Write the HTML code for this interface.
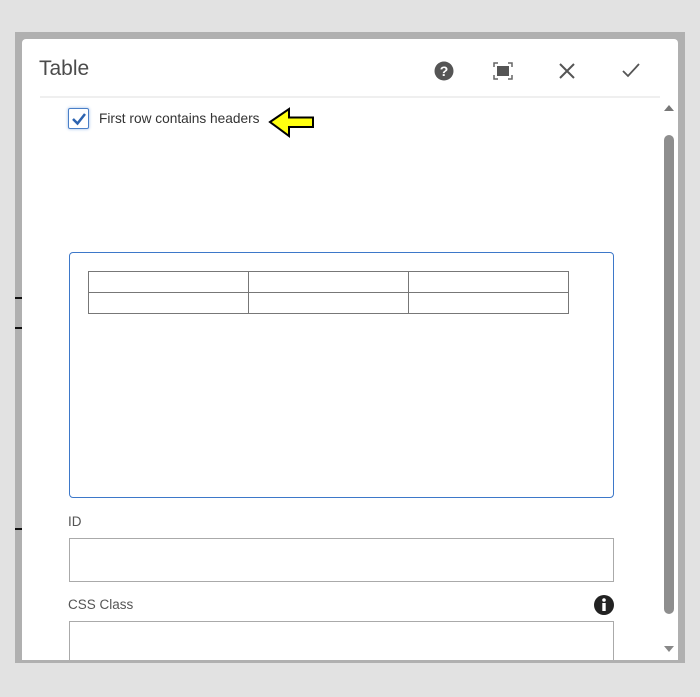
<!DOCTYPE html>
<html><head><style>
body{margin:0;width:700px;height:697px;background:#e2e2e2;position:relative;overflow:hidden;font-family:"Liberation Sans",sans-serif}
.abs{position:absolute}
</style></head><body>
<div class="abs" style="left:15px;top:32px;width:670px;height:631px;background:#b0b0b0"></div>
<div class="abs" style="left:15px;top:297px;width:7px;height:2px;background:#111"></div>
<div class="abs" style="left:15px;top:327px;width:7px;height:2px;background:#111"></div>
<div class="abs" style="left:15px;top:528px;width:7px;height:2px;background:#111"></div>
<div class="abs" style="left:22px;top:39px;width:656px;height:621px;background:#fff;border-radius:4px 4px 0 0;overflow:hidden">
<div class="abs" style="left:47px;top:582px;width:543px;height:50px;border:1px solid #aaa"></div>
</div>
<div class="abs" style="left:39px;top:57px;font-size:21px;color:#4b4b4b">Table</div>
<div class="abs" style="left:40px;top:96px;width:620px;height:2px;background:#efefef"></div>
<svg class="abs" style="left:434px;top:61px" width="20" height="20" viewBox="0 0 20 20"><circle cx="10" cy="10" r="9.5" fill="#555"/><text x="10" y="15" text-anchor="middle" font-size="14" font-weight="bold" fill="#fff" font-family="Liberation Sans">?</text></svg>
<svg class="abs" style="left:493px;top:62px" width="20" height="18" viewBox="0 0 20 18"><path d="M1 5V1h4M15 1h4v4M19 13v4h-4M5 17H1v-4" stroke="#666" stroke-width="1.5" fill="none"/><rect x="4" y="4" width="12" height="10" fill="#555"/></svg>
<svg class="abs" style="left:559px;top:63px" width="16" height="16"><path d="M1 1L15 15M15 1L1 15" stroke="#555" stroke-width="2"/></svg>
<svg class="abs" style="left:622px;top:63px" width="18" height="15"><path d="M1 8L6 13L17 1" stroke="#555" stroke-width="1.8" fill="none"/></svg>
<div class="abs" style="left:68px;top:108px;width:19px;height:19px;border:1.5px solid #4a7fc7;border-radius:2px;box-shadow:0 0 3px #9bbbe8"></div>
<svg class="abs" style="left:71px;top:111px" width="16" height="16"><path d="M2 8L6.5 12.5L14 3" stroke="#2c63b0" stroke-width="2.5" fill="none"/></svg>
<div class="abs" style="left:99px;top:111px;font-size:13.7px;color:#333">First row contains headers</div>
<svg class="abs" style="left:268px;top:107px" width="48" height="32"><path d="M2 15L21 2V10.5H45V20H21V29Z" fill="#ffff10" stroke="#000" stroke-width="2" stroke-linejoin="miter"/></svg>
<div class="abs" style="left:69px;top:252px;width:543px;height:244px;border:1.5px solid #3d78c9;border-radius:4px"></div>
<table class="abs" style="left:88px;top:271px;width:481px;height:43px;border-collapse:collapse"><tr><td style="border:1px solid #777"></td><td style="border:1px solid #777"></td><td style="border:1px solid #777"></td></tr><tr><td style="border:1px solid #777"></td><td style="border:1px solid #777"></td><td style="border:1px solid #777"></td></tr></table>
<div class="abs" style="left:68px;top:514px;font-size:13.5px;color:#555">ID</div>
<div class="abs" style="left:69px;top:538px;width:543px;height:42px;border:1px solid #aaa"></div>
<div class="abs" style="left:68px;top:597px;font-size:13.5px;color:#555">CSS Class</div>
<svg class="abs" style="left:594px;top:595px" width="20" height="20"><circle cx="10" cy="10" r="10" fill="#222"/><circle cx="10" cy="5" r="1.8" fill="#fff"/><rect x="8.3" y="8" width="3.4" height="8" fill="#fff"/></svg>
<svg class="abs" style="left:664px;top:104px" width="10" height="8"><path d="M0 7L5 1L10 7Z" fill="#777"/></svg>
<div class="abs" style="left:664px;top:135px;width:10px;height:479px;background:#8e8e8e;border-radius:5px"></div>
<svg class="abs" style="left:664px;top:645px" width="10" height="8"><path d="M0 1L5 7L10 1Z" fill="#888"/></svg>
</body></html>
